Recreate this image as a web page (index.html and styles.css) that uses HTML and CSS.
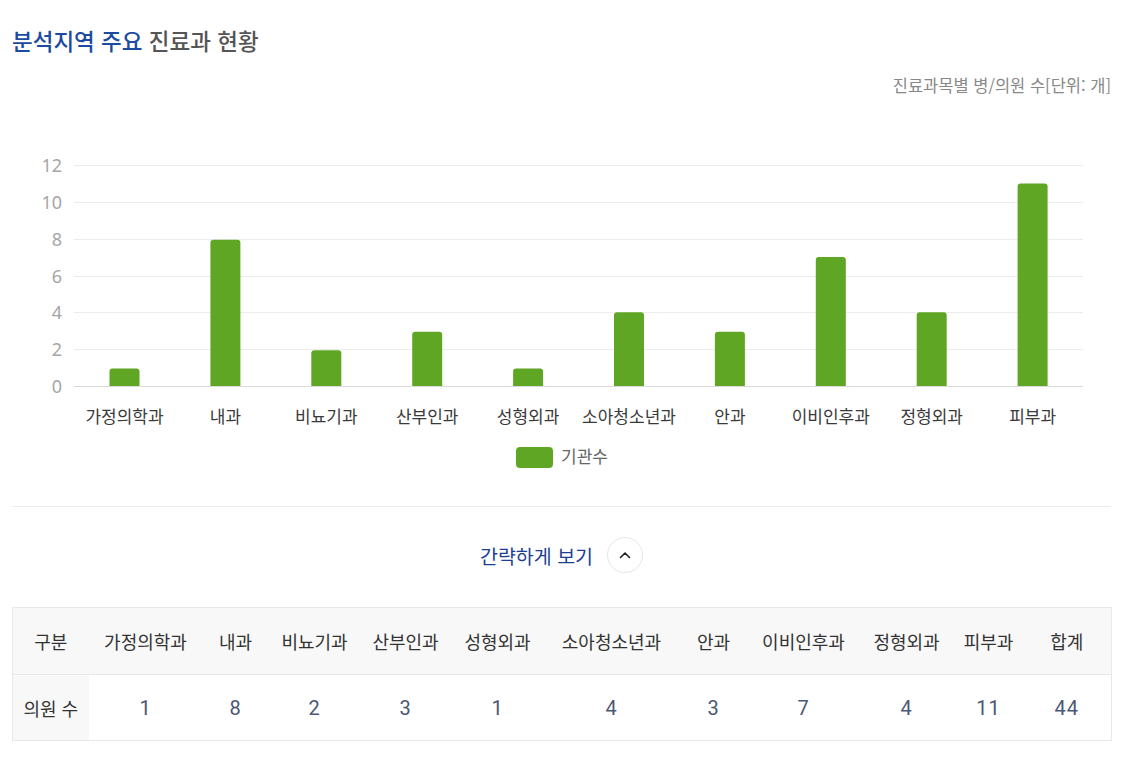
FILE: index.html
```html
<!DOCTYPE html>
<html lang="ko">
<head>
<meta charset="utf-8">
<title>분석지역 주요 진료과 현황</title>
<link rel="stylesheet" href="styles.css">
</head>
<body>
<div class="page">
  <h2 class="title"><span class="accent">분석지역 주요</span> 진료과 현황</h2>
  <p class="unit">진료과목별 병/의원 수[단위: 개]</p>

  <svg class="chart" width="1099" height="384" viewBox="0 0 1099 384">
    <g class="grid">
      <line x1="62" x2="1071" y1="69.5" y2="69.5"/>
      <line x1="62" x2="1071" y1="106.5" y2="106.5"/>
      <line x1="62" x2="1071" y1="143.5" y2="143.5"/>
      <line x1="62" x2="1071" y1="180.5" y2="180.5"/>
      <line x1="62" x2="1071" y1="216.5" y2="216.5"/>
      <line x1="62" x2="1071" y1="253.5" y2="253.5"/>
    </g>
    <line class="axis" x1="62" x2="1071" y1="290.5" y2="290.5"/>
    <g class="ylabels">
      <text x="50" y="75.5">12</text>
      <text x="50" y="112.5">10</text>
      <text x="50" y="149.5">8</text>
      <text x="50" y="186.5">6</text>
      <text x="50" y="222.5">4</text>
      <text x="50" y="259.5">2</text>
      <text x="50" y="296.5">0</text>
    </g>
    <g class="bars">
      <path d="M97.5 290 V275.6 a3 3 0 0 1 3 -3 H124.5 a3 3 0 0 1 3 3 V290 Z"/>
      <path d="M198.4 290 V146.7 a3 3 0 0 1 3 -3 H225.4 a3 3 0 0 1 3 3 V290 Z"/>
      <path d="M299.3 290 V257.2 a3 3 0 0 1 3 -3 H326.3 a3 3 0 0 1 3 3 V290 Z"/>
      <path d="M400.2 290 V238.7 a3 3 0 0 1 3 -3 H427.2 a3 3 0 0 1 3 3 V290 Z"/>
      <path d="M501.1 290 V275.6 a3 3 0 0 1 3 -3 H528.1 a3 3 0 0 1 3 3 V290 Z"/>
      <path d="M602 290 V219.3 a3 3 0 0 1 3 -3 H629 a3 3 0 0 1 3 3 V290 Z"/>
      <path d="M702.9 290 V238.7 a3 3 0 0 1 3 -3 H729.9 a3 3 0 0 1 3 3 V290 Z"/>
      <path d="M803.8 290 V164.1 a3 3 0 0 1 3 -3 H830.8 a3 3 0 0 1 3 3 V290 Z"/>
      <path d="M904.7 290 V219.3 a3 3 0 0 1 3 -3 H931.7 a3 3 0 0 1 3 3 V290 Z"/>
      <path d="M1005.6 290 V90.4 a3 3 0 0 1 3 -3 H1032.6 a3 3 0 0 1 3 3 V290 Z"/>
    </g>
    <g class="xlabels">
      <text x="112.5" y="327">가정의학과</text>
      <text x="213.4" y="327">내과</text>
      <text x="314.3" y="327">비뇨기과</text>
      <text x="415.2" y="327">산부인과</text>
      <text x="516.1" y="327">성형외과</text>
      <text x="617" y="327">소아청소년과</text>
      <text x="717.9" y="327">안과</text>
      <text x="818.8" y="327">이비인후과</text>
      <text x="919.7" y="327">정형외과</text>
      <text x="1020.6" y="327">피부과</text>
    </g>
    <rect class="swatch" x="504" y="351" width="37" height="21" rx="4"/>
    <text class="legend" x="549" y="367">기관수</text>
  </svg>

  <div class="divider"></div>

  <div class="toggle">
    <span class="toggle-text">간략하게 보기</span>
    <button class="toggle-btn" type="button" aria-label="접기">
      <svg width="14" height="14" viewBox="0 0 14 14"><path d="M2.5 9.5 L7 5 L11.5 9.5" fill="none" stroke="#222" stroke-width="1.6" stroke-linecap="round" stroke-linejoin="round"/></svg>
    </button>
  </div>

  <table class="data">
    <colgroup>
      <col><col><col><col><col><col><col><col><col><col><col><col>
    </colgroup>
    <thead>
      <tr>
        <th>구분</th><th>가정의학과</th><th>내과</th><th>비뇨기과</th><th>산부인과</th><th>성형외과</th><th>소아청소년과</th><th>안과</th><th>이비인후과</th><th>정형외과</th><th>피부과</th><th>합계</th>
      </tr>
    </thead>
    <tbody>
      <tr>
        <th class="rowhead">의원 수</th><td>1</td><td>8</td><td>2</td><td>3</td><td>1</td><td>4</td><td>3</td><td>7</td><td>4</td><td>11</td><td>44</td>
      </tr>
    </tbody>
  </table>
</div>
</body>
</html>
```

FILE: styles.css
```css
* { box-sizing: border-box; }
html, body { margin: 0; padding: 0; background: #fff; }
body {
  font-family: "Noto Sans CJK KR", "Noto Sans", sans-serif;
  color: #333;
}
.page {
  width: 1099px;
  margin-left: 12px;
  padding-top: 24px;
}
.title {
  margin: 0;
  font-size: 22.5px;
  line-height: 32px;
  font-weight: 500;
  color: #555;
}
.title .accent { color: #1b4ba0; }
.unit {
  margin: 18px 0 0;
  text-align: right;
  font-size: 16.5px;
  line-height: 22px;
  color: #888;
}
.chart { display: block; }
.grid line { stroke: #ececec; stroke-width: 1; }
.axis { stroke: #d9d9d9; stroke-width: 1; }
.ylabels text {
  font-family: "Noto Sans", sans-serif;
  font-size: 18px;
  fill: #a6a6a6;
  text-anchor: end;
}
.bars path { fill: #60a625; }
.xlabels text {
  font-size: 17px;
  fill: #3a3a3a;
  text-anchor: middle;
}
.swatch { fill: #60a625; }
.legend { font-size: 17px; fill: #666; }
.divider {
  margin-top: 26px;
  height: 1px;
  background: #ececec;
}
.toggle {
  margin-top: 30px;
  display: flex;
  justify-content: center;
  align-items: center;
  gap: 14px;
}
.toggle-text {
  font-size: 19.5px;
  color: #1c3f94;
  line-height: 35px;
}
.toggle-btn {
  width: 36px;
  height: 36px;
  border-radius: 50%;
  border: 1px solid #e6e6e6;
  background: #fff;
  display: flex;
  align-items: center;
  justify-content: center;
  padding: 0;
}
.toggle-btn svg { display: block; }
.data {
  margin-top: 34px;
  width: 1099px;
  border-collapse: collapse;
  table-layout: fixed;
  border: 1px solid #e8e8e8;
}
.data col:nth-child(1) { width: 76px; }
.data col:nth-child(2) { width: 114px; }
.data col:nth-child(3) { width: 66px; }
.data col:nth-child(4) { width: 92px; }
.data col:nth-child(5) { width: 90px; }
.data col:nth-child(6) { width: 94px; }
.data col:nth-child(7) { width: 134px; }
.data col:nth-child(8) { width: 70px; }
.data col:nth-child(9) { width: 110px; }
.data col:nth-child(10) { width: 96px; }
.data col:nth-child(11) { width: 68px; }
.data col:nth-child(12) { width: 89px; }
.data thead th {
  height: 67px;
  background: #f8f8f8;
  font-size: 18px;
  font-weight: 400;
  color: #333;
  text-align: center;
  padding: 0;
  border-bottom: 1px solid #e8e8e8;
}
.data tbody td, .data tbody th {
  height: 66px;
  text-align: center;
  padding: 0;
}
.data tbody .rowhead {
  background: #f8f8f8;
  font-size: 18px;
  font-weight: 400;
  color: #333;
}
.data tbody td {
  font-family: Roboto, "Noto Sans", sans-serif;
  font-size: 20px;
  letter-spacing: 1px;
  color: #4a5775;
}
```
